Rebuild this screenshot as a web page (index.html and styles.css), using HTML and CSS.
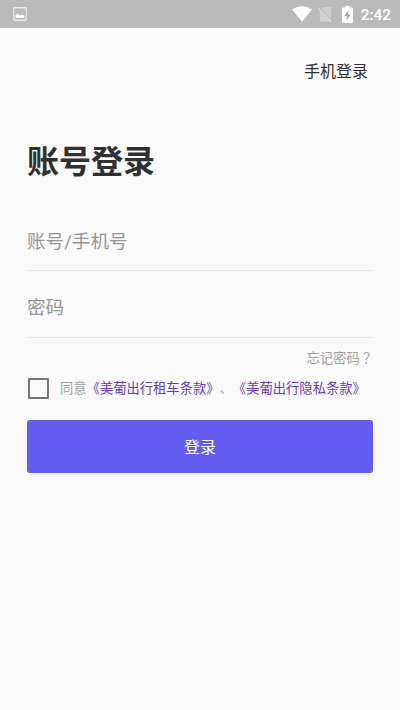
FILE: index.html
```html
<!DOCTYPE html>
<html lang="zh-CN">
<head>
<meta charset="utf-8">
<title>账号登录</title>
<link rel="stylesheet" href="styles.css">
</head>
<body>
<header class="status">
  <svg class="picture" width="14" height="14" viewBox="0 0 14 14"><rect x=".75" y=".75" width="12.5" height="12.5" rx="1" fill="none" stroke="#ececec" stroke-width="1.3"/><path d="M2.5 11V8.5L4.5 6.5l2 2 1-.8 1 .8 1.3-1 1.7 1.8V11z" fill="#fff"/></svg>
  <div class="indicators">
    <svg class="wifi" width="20" height="16" viewBox="0 0 20 16"><path d="M0 3.4Q10-3 20 3.4L10 15.7z" fill="#fff"/></svg>
    <svg class="sim" width="15" height="17" viewBox="0 0 15 17"><path d="M5.5 1H13v14.5H2V4.5z" fill="#d0d0d0"/><path d="M1.2 2L14 16" stroke="#b9b9b9" stroke-width="2.4"/><path d="M.5 2.5L13.2 16" stroke="#dedede" stroke-width="1.2"/></svg>
    <svg class="battery" width="11" height="17" viewBox="0 0 10 17" preserveAspectRatio="none"><path d="M3 0h4v1.6h2q1 0 1 1V16q0 1-1 1H1q-1 0-1-1V2.6q0-1 1-1h2z" fill="#fff"/><path d="M6 4.3L2 10h2.6L4 14.2 8.2 8.4H5.5z" fill="#a5a5a5"/></svg>
    <span class="clock">2:42</span>
  </div>
</header>
<main class="page">
  <a class="switch">手机登录</a>
  <h1 class="title">账号登录</h1>
  <div class="field">账号/手机号</div>
  <div class="field">密码</div>
  <a class="forgot">忘记密码<span class="mark" lang="zh-TW">？</span></a>
  <div class="agreement">
    <span class="checkbox"></span>
    <p class="terms">同意<a>《美葡出行租车条款》</a>、<a>《美葡出行隐私条款》</a></p>
  </div>
  <button class="submit">登录</button>
</main>
</body>
</html>
```
FILE: styles.css
```css
* { box-sizing: border-box; }

body {
  margin: 0;
  height: 710px;
  overflow: hidden;
  background: #fafafa;
  color: #303030;
  font-family: Roboto, "Noto Sans CJK SC", sans-serif;
  text-spacing-trim: space-all;
}

svg { display: block; }

.status {
  display: flex;
  align-items: center;
  justify-content: space-between;
  height: 28px;
  padding: 0 9px 0 13px;
  background: #bababa;
}

.indicators { display: flex; align-items: center; }
.sim { margin-left: 6px; }
.battery { margin-left: 9px; }
.clock {
  margin-left: 8px;
  color: #fff;
  font-size: 15.4px;
  font-weight: 500;
  line-height: 28px;
  padding-top: 2px;
}

.page {
  display: flex;
  flex-direction: column;
  padding: 32px 27px 0;
}

.switch {
  align-self: flex-end;
  margin-right: 5px;
  font-size: 16px;
  line-height: 24px;
}

.title {
  margin: 54px 0 0;
  font-size: 32px;
  font-weight: 700;
  line-height: 48px;
}

.field {
  height: 67px;
  padding-top: 23px;
  border-bottom: 1px solid #e6e6e6;
  color: #959595;
  font-size: 18.6px;
  line-height: 28px;
}
.title + .field { height: 85px; padding-top: 42px; }

.forgot {
  align-self: flex-end;
  height: 20px;
  margin-top: 11px;
  color: #a0a0a0;
  font-size: 13.3px;
  line-height: 20px;
}
.mark { font-family: "Noto Sans CJK TC", sans-serif; line-height: 1; }

.agreement {
  display: flex;
  align-items: center;
  height: 20px;
  margin-top: 9px;
}

.checkbox {
  width: 21px;
  height: 21px;
  margin-left: 1px;
  border: 2px solid #757575;
  border-radius: 1px;
}

.terms {
  margin: 2px 0 0 11px;
  color: #a0a0a0;
  font-size: 13.3px;
  line-height: 20px;
  white-space: nowrap;
}
.terms a { color: #673ab7; }

.submit {
  height: 53px;
  margin-top: 22px;
  padding: 3px 0 0;
  border: 0;
  border-radius: 3px;
  background: #635df2;
  color: #fff;
  font: 400 16px/50px Roboto, "Noto Sans CJK SC", sans-serif;
}
```
